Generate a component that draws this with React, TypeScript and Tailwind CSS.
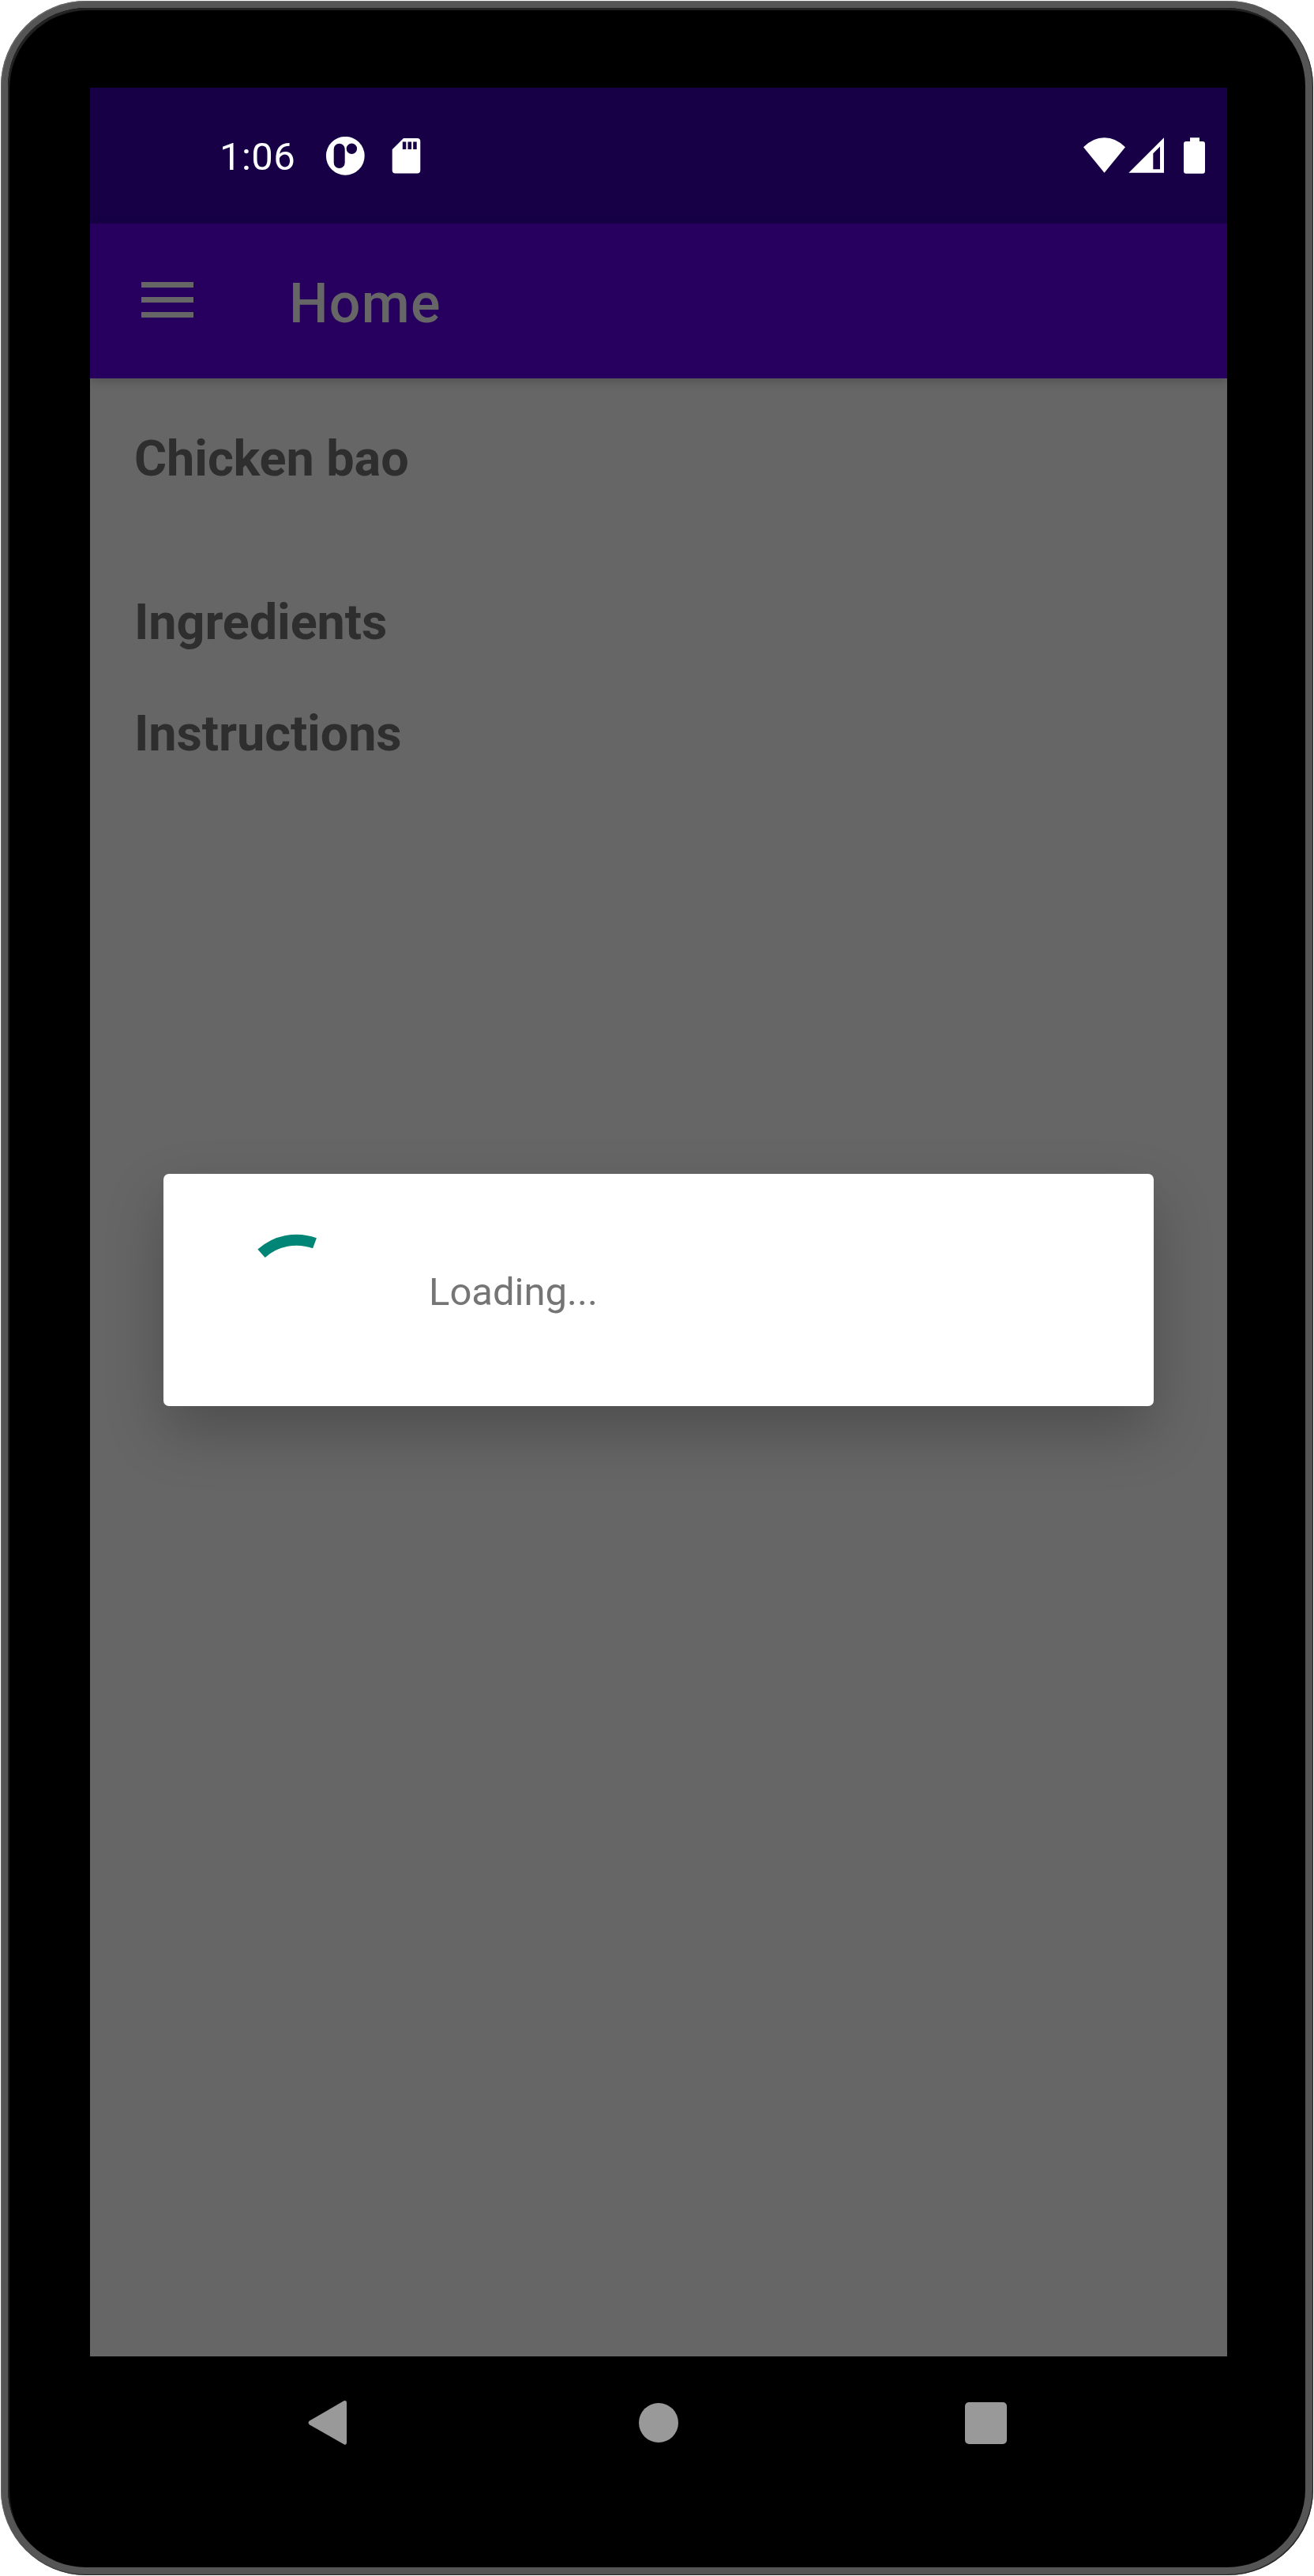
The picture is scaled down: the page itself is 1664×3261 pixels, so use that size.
const StatusLeftIcons = () => (
  <svg className="ml-[25px] h-[49px] w-[136px]" viewBox="400 173 136 49" fill="#fff">
    <path
      fillRule="evenodd"
      d="M437.3 172.9a24.4 24.4 0 1 0 0 48.8a24.4 24.4 0 1 0 0-48.8zM429.7 181.7a7 7 0 0 1 7 7v17.3a7 7 0 0 1-14 0v-17.3a7 7 0 0 1 7-7zM445.4 181.6a6.7 6.7 0 1 1 0 13.4a6.7 6.7 0 1 1 0-13.4z"
    />
    <path
      fillRule="evenodd"
      d="M511 175h17.300a4 4 0 0 1 4 4v36.600a4 4 0 0 1-4 4h-27.600a4 4 0 0 1-4-4v-26.300zM509.800 179.400v9.500h4.500v-9.500zM516.500 179.400v9.500h4.600v-9.500zM523.200 179.400v9.500h4.500v-9.500z"
    />
  </svg>
);

const StatusRightIcons = () => (
  <svg className="h-[49px] w-[160px]" viewBox="1370 173 160 49" fill="#fff">
    <path d="M1372 186.300q12-12 26.500-12t26.500 12l-26.500 32.400z" />
    <path fillRule="evenodd" d="M1429.300 218.800L1474 174.300v44.500zM1460.300 194.300v20h8.700v-28.700z" />
    <path d="M1507 174.200h12v4.800h4a3 3 0 0 1 3 3v34.700a3 3 0 0 1-3 3h-21a3 3 0 0 1-3-3v-34.700a3 3 0 0 1 3-3h5z" />
  </svg>
);

const StatusBar = () => (
  <div className="flex h-[172px] items-center justify-between bg-[#170046] pr-[24px] pl-[164px]">
    <div className="flex items-center">
      <div className="mt-1 w-[97px] text-[49px] leading-[58px] tracking-[0.4px] text-white">1:06</div>
      <StatusLeftIcons />
    </div>
    <StatusRightIcons />
  </div>
);

const AppBar = () => (
  <header className="relative z-10 flex h-[196px] items-center bg-[#27005f] pl-[65px] shadow-[0_4px_12px_rgba(0,0,0,0.2)]">
    <div className="-mt-[3px] flex w-[66px] flex-col gap-3">
      <div className="h-[7px] bg-[#666]" />
      <div className="h-[7px] bg-[#666]" />
      <div className="h-[7px] bg-[#666]" />
    </div>
    <h1 className="mt-[6px] ml-[121px] text-[70px] leading-[82px] font-medium tracking-[1.2px] text-[#666]">Home</h1>
  </header>
);

const LoadingDialog = () => (
  <div className="absolute top-[1375px] left-[93px] flex h-[294px] w-[1254px] rounded-[7px] bg-white pt-[66px] pl-[84px] shadow-[0_32px_74px_rgba(0,0,0,0.24)]">
    <svg className="h-[168px] w-[168px]" viewBox="291 1552 168 168" fill="none">
      <path d="M331 1586.800A66.500 66.500 0 0 1 398.500 1573.800" stroke="#008577" strokeWidth="14" />
    </svg>
    <p className="mt-[55px] ml-[84px] text-[49px] leading-[58px] text-[#757575]">Loading...</p>
  </div>
);

const NavBar = () => (
  <nav className="flex h-[168px] items-center bg-black pl-[276px]">
    <svg className="h-[58px] w-[50px]" viewBox="0 0 50 58" fill="#999">
      <path d="M45.500 1.300Q49 0 49 4v50Q49 58 45.500 56.300L2 31.500Q-1 29 2 26.500z" />
    </svg>
    <div className="ml-[369px] h-[50px] w-[50px] rounded-full bg-[#999]" />
    <div className="ml-[363px] h-[53px] w-[53px] rounded-[5px] bg-[#999]" />
  </nav>
);

export default function App() {
  return (
    <div className="h-[3261px] w-[1664px] bg-white p-px font-['Roboto',sans-serif]">
      <div className="h-[3259px] w-[1662px] rounded-[108px] bg-[#555] pt-[9px] pl-[9px] shadow-[inset_-1px_-1px_1px_#222,inset_1px_1px_1px_#6a6a6a]">
        <div className="h-[3240px] w-[1643px] rounded-[99px] bg-black pt-[101px] pl-[104px] shadow-[inset_2px_3px_1px_#242424]">
          <div className="relative flex h-[3040px] w-[1440px] flex-col">
            <StatusBar />
            <AppBar />
            <main className="grow bg-[#666] pl-[56px] text-[63px] leading-[74px] font-bold tracking-[-0.1px] text-[#2e2e2e]">
              <h2 className="mt-[65px]">Chicken bao</h2>
              <h2 className="mt-[133px]">Ingredients</h2>
              <h2 className="mt-[67px]">Instructions</h2>
            </main>
            <NavBar />
            <LoadingDialog />
          </div>
        </div>
      </div>
    </div>
  );
}
